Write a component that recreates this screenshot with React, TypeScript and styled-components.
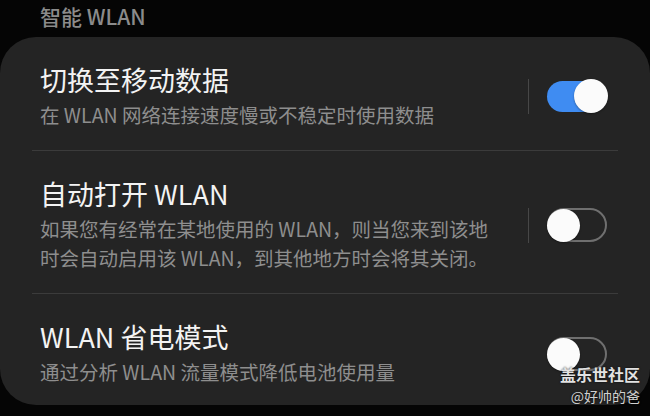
import styled, { createGlobalStyle } from 'styled-components';

const GlobalStyle = createGlobalStyle`
  html, body {
    margin: 0;
    padding: 0;
    background: #050505;
  }
  body {
    font-family: "Noto Sans CJK SC", "Noto Sans", sans-serif;
  }
`;

const Screen = styled.div`
  position: relative;
  width: 650px;
  height: 416px;
  overflow: hidden;
  background: #050505;
`;

const SectionHeader = styled.div`
  padding: 4px 0 0 40px;
  height: 37px;
  box-sizing: border-box;
  font-size: 21px;
  line-height: 24px;
  font-weight: 500;
  color: #8b8b8b;
`;

const Card = styled.div`
  background: #242424;
  border-radius: 36px;
  padding: 0 32px 0 32px;
`;

const Row = styled.div<{ $first?: boolean }>`
  display: flex;
  align-items: center;
  padding: 27px 11px 21px 8px;
  border-top: ${(p) => (p.$first ? 'none' : '1px solid #3b3b3b')};
  &:last-child {
    padding-bottom: 19px;
  }
`;

const TextCol = styled.div`
  flex: 1;
  min-width: 0;
`;

const Title = styled.div`
  font-size: 27px;
  line-height: 32px;
  color: #f3f3f3;
`;

const Desc = styled.div`
  margin-top: 4px;
  max-width: 456px;
  font-size: 19.5px;
  line-height: 29px;
  color: #8e8e8e;
`;

const Side = styled.div`
  display: flex;
  align-items: center;
  gap: 18px;
  margin-left: 12px;
`;

const Separator = styled.div<{ $hidden?: boolean }>`
  width: 1px;
  height: 35px;
  background: ${(p) => (p.$hidden ? 'transparent' : '#474747')};
`;

const Track = styled.div<{ $on: boolean }>`
  position: relative;
  box-sizing: border-box;
  width: 60px;
  height: ${(p) => (p.$on ? '31px' : '34px')};
  border-radius: 17px;
  background: ${(p) => (p.$on ? '#3f8cf2' : 'transparent')};
  border: ${(p) => (p.$on ? 'none' : '2px solid #6f6f6f')};
`;

const Knob = styled.div<{ $on: boolean }>`
  position: absolute;
  top: ${(p) => (p.$on ? '-2px' : '-1px')};
  ${(p) => (p.$on ? 'right: -1px;' : 'left: -2px;')}
  width: ${(p) => (p.$on ? '34px' : '33px')};
  height: ${(p) => (p.$on ? '34px' : '33px')};
  border-radius: 50%;
  background: #fbfbfb;
  box-shadow: 0 1px 2px rgba(0, 0, 0, 0.35);
`;

const Watermark = styled.div`
  position: absolute;
  right: 10px;
  bottom: 10px;
  display: flex;
  flex-direction: column;
  align-items: flex-end;
  text-shadow: 0 0 2px rgba(0, 0, 0, 0.8);
`;

const MarkTitle = styled.div`
  font-size: 16px;
  line-height: 23px;
  font-weight: 700;
  color: #e2e2e2;
`;

const MarkUser = styled.div`
  font-size: 14px;
  line-height: 20px;
  color: #d0d0d0;
`;

type Item = {
  title: string;
  desc: string;
  on: boolean;
  separator: boolean;
};

const items: Item[] = [
  {
    title: '切换至移动数据',
    desc: '在 WLAN 网络连接速度慢或不稳定时使用数据',
    on: true,
    separator: true,
  },
  {
    title: '自动打开 WLAN',
    desc: '如果您有经常在某地使用的 WLAN，则当您来到该地时会自动启用该 WLAN，到其他地方时会将其关闭。',
    on: false,
    separator: true,
  },
  {
    title: 'WLAN 省电模式',
    desc: '通过分析 WLAN 流量模式降低电池使用量',
    on: false,
    separator: false,
  },
];

const Toggle = ({ on }: { on: boolean }) => (
  <Track $on={on}>
    <Knob $on={on} />
  </Track>
);

export default function App() {
  return (
    <Screen>
      <GlobalStyle />
      <SectionHeader>智能 WLAN</SectionHeader>
      <Card>
        {items.map((it, i) => (
          <Row key={it.title} $first={i === 0}>
            <TextCol>
              <Title>{it.title}</Title>
              <Desc>{it.desc}</Desc>
            </TextCol>
            <Side>
              <Separator $hidden={!it.separator} />
              <Toggle on={it.on} />
            </Side>
          </Row>
        ))}
      </Card>
      <Watermark>
        <MarkTitle>盖乐世社区</MarkTitle>
        <MarkUser>@好帅的爸</MarkUser>
      </Watermark>
    </Screen>
  );
}
